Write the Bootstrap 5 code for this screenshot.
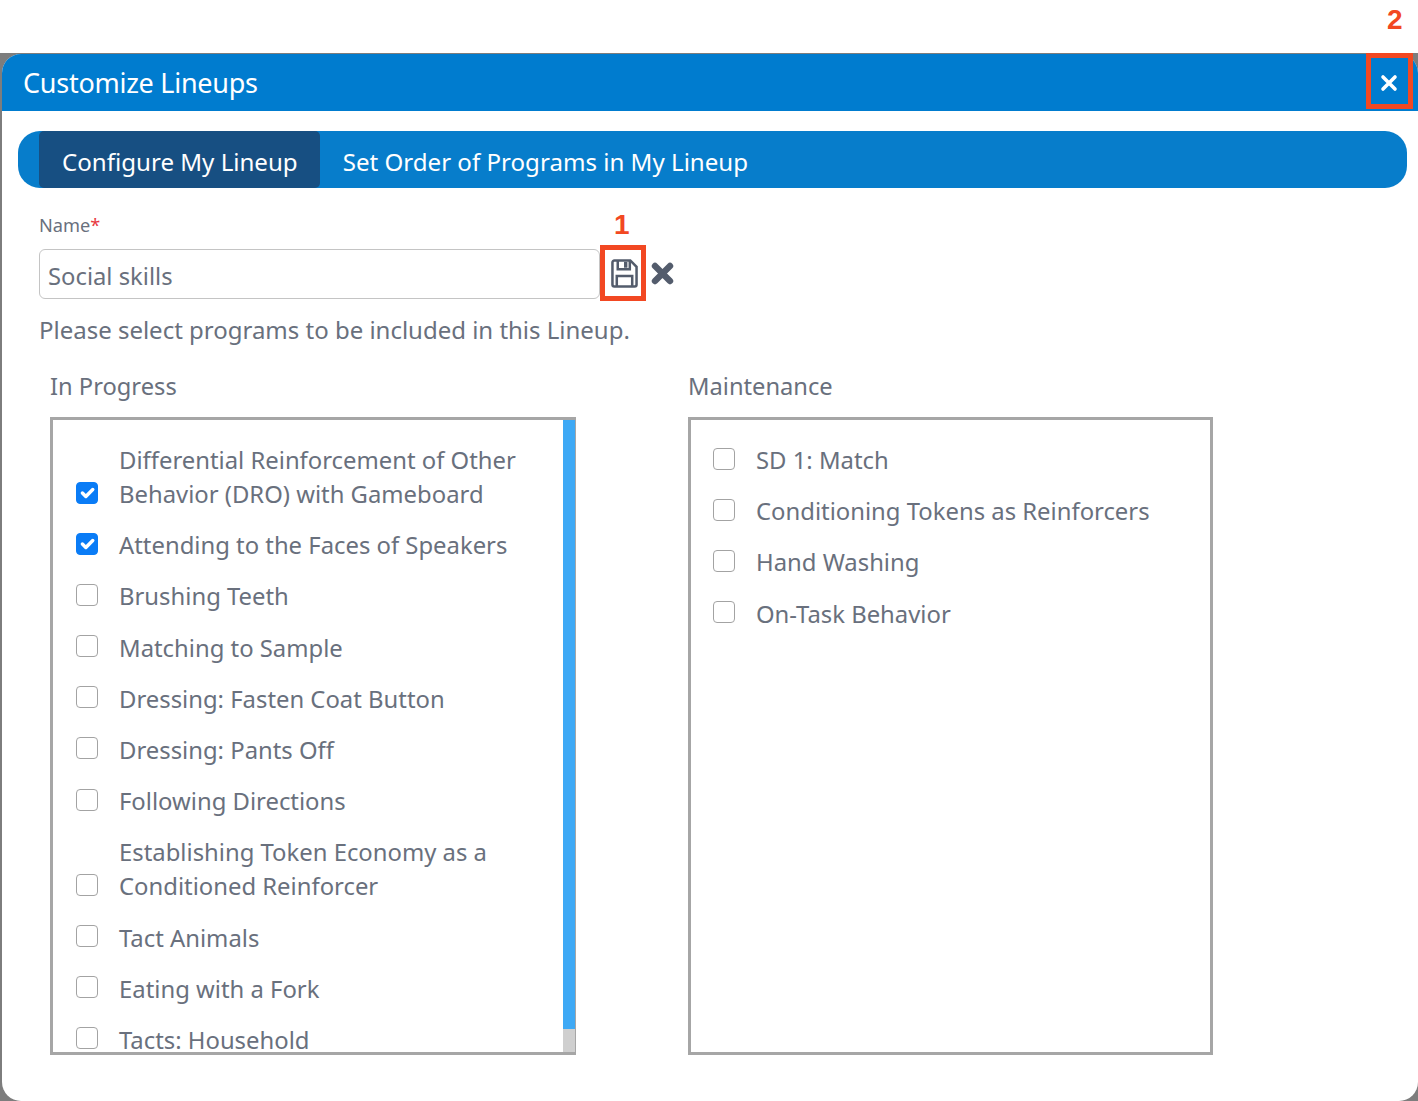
<!DOCTYPE html>
<html lang="en"><head><meta charset="utf-8"><title>Customize Lineups</title>
<link href="https://cdn.jsdelivr.net/npm/bootstrap@5.3.0/dist/css/bootstrap.min.css" rel="stylesheet">
<style>
html,body{height:1101px;overflow:hidden;background:#fff}
body{font-family:"Noto Sans","Open Sans",sans-serif;color:#69707d;position:relative}
.backdrop-wrap{margin-top:53px;height:1048px;background:#7d7d7d;padding:1px 0 0 2px}
.dialog-box{height:100%;background:#fff;border-radius:19px;overflow:hidden;border:0}
.dialog-head{height:57px;background:#007ccf;padding:0 0 0 21px;color:#fff}
.dialog-title{font-size:27px;letter-spacing:-.26px;font-weight:400;margin:0;line-height:1}
.close-x{width:46px;height:57px;display:flex;align-items:center;justify-content:center;padding:0;background:none;border:0;margin-right:6px}
.dialog-main{padding:20px 11px 0 16px}
.tab-strip{height:57px;background:#077dcb;border-radius:22px;padding-left:21px;flex-wrap:nowrap}
.tab-strip .nav-link{height:57px;color:#fff;font-size:24.1px;line-height:61px;padding:0 22px 0 23px;border-radius:5px}
.tab-strip .nav-link.active{background:#174f82;color:#fff}
.form-zone{padding:24px 0 0 21px}
.name-label{font-size:18.2px;line-height:26px;margin:0 0 11px 0;color:#69707d}
.name-label span{color:#e8393f}
.name-row{height:50px}
.name-input.form-control{width:561px;height:50px;border:1px solid #c4c4c4;border-radius:6px;font-size:23.8px;line-height:52px;color:#69707d;padding:4px 8px 0;background:#fff}
.icon-btn{background:none;border:0;padding:0;line-height:0}
.save-btn{margin:0 0 2px 11px}
.cancel-btn{margin:0 0 2px 13px}
.hint-text{font-size:24px;line-height:34px;margin:14px 0 0 0;color:#69707d;letter-spacing:-.01px}
.lists-row{margin-top:22px;width:1200px;padding-left:32px}
.list-col{width:526px;flex:none}
.list-col+.list-col{width:525px;margin-left:112px}
.list-head{font-size:23.7px;line-height:34px;margin:0 0 14px;color:#69707d}
.pick-box{height:638px;border:3px solid #a6a6a6;position:relative;overflow:hidden;padding:23px 0 0 23px}
.pick-box.has-rail{border-right-width:1px}
.pick-box.no-rail{padding-left:22px}
.pick-row{display:flex;align-items:flex-end;margin:0 0 17.2px;padding-right:40px;font-size:23.85px;line-height:34px;color:#69707d}
.pick-row .form-check-input{width:22px;height:22px;margin:0 21px 7.500px 0;flex:none;border:1.5px solid #a3a3a3;border-radius:4px;float:none}
.pick-row .form-check-input:checked{background-color:#0a7cf6;border-color:#0a7cf6;background-size:115%}
.pick-row label{margin:0}
.scroll-rail{position:absolute;top:0;right:0;bottom:0;width:12px;background:#cfcfcf}
.scroll-thumb{height:609px;background:#3ea9f5}
.mark-num{position:absolute;color:#f24822;font-weight:700;font-size:28px;line-height:1;font-family:"Liberation Sans",sans-serif}
.mark-box{position:absolute;border:5px solid #f24822}
</style></head>
<body>
<div class="backdrop-wrap">
<div class="dialog-box modal-content">
  <div class="dialog-head d-flex align-items-center justify-content-between">
    <h5 class="dialog-title">Customize Lineups</h5>
    <button class="close-x" type="button" aria-label="Close"><svg width="18" height="18" viewBox="0 0 18 18"><path d="M3 3L15 15M15 3L3 15" stroke="#fff" stroke-width="3.6" stroke-linecap="round"/></svg></button>
  </div>
  <div class="dialog-main">
    <ul class="nav tab-strip">
      <li class="nav-item"><a class="nav-link active" href="#">Configure My Lineup</a></li>
      <li class="nav-item"><a class="nav-link" href="#">Set Order of Programs in My Lineup</a></li>
    </ul>
    <div class="form-zone">
      <p class="name-label">Name<span>*</span></p>
      <div class="name-row d-flex align-items-center">
        <input class="form-control name-input" type="text" value="Social skills">
        <button class="icon-btn save-btn" type="button" aria-label="Save"><svg width="27" height="29" viewBox="0 0 28 30"><path d="M3.5 1.5H20L26.5 8V26.5a2 2 0 0 1-2 2H3.5a2 2 0 0 1-2-2V3.500a2 2 0 0 1 2-2Z" fill="none" stroke="#535c6c" stroke-width="2.6"/><path d="M7 2V10.500H19.500V2" fill="none" stroke="#535c6c" stroke-width="2.6"/><rect x="13.500" y="3" width="3.500" height="6" fill="#535c6c"/><path d="M6 28V17.500H22V28" fill="none" stroke="#535c6c" stroke-width="2.600"/></svg></button>
        <button class="icon-btn cancel-btn" type="button" aria-label="Cancel"><svg width="23" height="23" viewBox="0 0 23 23"><path d="M4 4L19 19M19 4L4 19" stroke="#535c6c" stroke-width="6.4" stroke-linecap="round"/></svg></button>
      </div>
      <p class="hint-text">Please select programs to be included in this Lineup.</p>
    </div>
    <div class="lists-row d-flex">
      <div class="list-col">
        <p class="list-head">In Progress</p>
        <div class="pick-box has-rail">
          <div class="pick-row"><input class="form-check-input" type="checkbox" id="p1" checked><label for="p1">Differential Reinforcement of Other Behavior (DRO) with Gameboard</label></div>
          <div class="pick-row"><input class="form-check-input" type="checkbox" id="p2" checked><label for="p2">Attending to the Faces of Speakers</label></div>
          <div class="pick-row"><input class="form-check-input" type="checkbox" id="p3"><label for="p3">Brushing Teeth</label></div>
          <div class="pick-row"><input class="form-check-input" type="checkbox" id="p4"><label for="p4">Matching to Sample</label></div>
          <div class="pick-row"><input class="form-check-input" type="checkbox" id="p5"><label for="p5">Dressing: Fasten Coat Button</label></div>
          <div class="pick-row"><input class="form-check-input" type="checkbox" id="p6"><label for="p6">Dressing: Pants Off</label></div>
          <div class="pick-row"><input class="form-check-input" type="checkbox" id="p7"><label for="p7">Following Directions</label></div>
          <div class="pick-row"><input class="form-check-input" type="checkbox" id="p8"><label for="p8">Establishing Token Economy as a Conditioned Reinforcer</label></div>
          <div class="pick-row"><input class="form-check-input" type="checkbox" id="p9"><label for="p9">Tact Animals</label></div>
          <div class="pick-row"><input class="form-check-input" type="checkbox" id="p10"><label for="p10">Eating with a Fork</label></div>
          <div class="pick-row"><input class="form-check-input" type="checkbox" id="p11"><label for="p11">Tacts: Household</label></div>
          <div class="scroll-rail"><div class="scroll-thumb"></div></div>
        </div>
      </div>
      <div class="list-col">
        <p class="list-head">Maintenance</p>
        <div class="pick-box no-rail">
          <div class="pick-row"><input class="form-check-input" type="checkbox" id="m1"><label for="m1">SD 1: Match</label></div>
          <div class="pick-row"><input class="form-check-input" type="checkbox" id="m2"><label for="m2">Conditioning Tokens as Reinforcers</label></div>
          <div class="pick-row"><input class="form-check-input" type="checkbox" id="m3"><label for="m3">Hand Washing</label></div>
          <div class="pick-row"><input class="form-check-input" type="checkbox" id="m4"><label for="m4">On-Task Behavior</label></div>
        </div>
      </div>
    </div>
  </div>
</div>
</div>
<span class="mark-num" style="left:1387px;top:6px">2</span>
<span class="mark-num" style="left:614px;top:211px">1</span>
<div class="mark-box" style="left:1366px;top:53px;width:47px;height:56px"></div>
<div class="mark-box" style="left:600px;top:245px;width:46px;height:56px"></div>
<script src="https://cdn.jsdelivr.net/npm/bootstrap@5.3.0/dist/js/bootstrap.bundle.min.js"></script>
</body></html>
